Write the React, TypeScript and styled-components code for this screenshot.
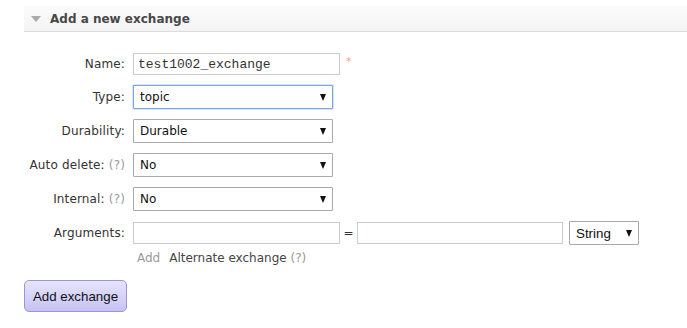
import React from "react";
import styled, { createGlobalStyle } from "styled-components";

const GlobalStyle = createGlobalStyle`
    html, body {
        margin: 0;
        padding: 0;
        background: #ffffff;
    }
    body {
        font-family: "DejaVu Sans", Verdana, sans-serif;
        font-size: 12px;
        color: #444444;
    }
`;

const Wrap = styled.div`
    width: 687px;
    height: 328px;
    overflow: hidden;
    padding-top: 6px;
    box-sizing: border-box;
`;

const SectionHeader = styled.div`
    margin-left: 24px;
    height: 25px;
    background: linear-gradient(#fbfbfb, #f4f4f4);
    border-bottom: 1px solid #dcdcdc;
    display: flex;
    align-items: center;
    padding-left: 7px;
    gap: 9px;
`;

const Caret = styled.span`
    width: 0;
    height: 0;
    border-left: 5px solid transparent;
    border-right: 5px solid transparent;
    border-top: 6px solid #aaaaaa;
    margin-top: 1px;
`;

const Title = styled.h2`
    margin: 0;
    font-size: 12px;
    font-weight: bold;
    color: #484848;
`;

const Form = styled.div`
    display: grid;
    grid-template-columns: 101px auto;
    column-gap: 8px;
    row-gap: 10px;
    padding: 21px 0 0 24px;
    align-items: center;
`;

const Label = styled.label`
    text-align: right;
    color: #333333;
    white-space: nowrap;
    letter-spacing: 0.15px;
`;

const Help = styled.span`
    color: #999999;
    margin-left: 4px;
`;

const Field = styled.div`
    display: flex;
    align-items: center;
`;

const TextInput = styled.input<{ $width: number }>`
    width: ${(p) => p.$width}px;
    height: 22px;
    box-sizing: border-box;
    border: 1px solid #cccccc;
    padding: 0 4px;
    font-family: "Liberation Mono", "Courier New", monospace;
    font-size: 13px;
    color: #333333;
    outline: none;
`;

const Required = styled.span`
    color: #f4a090;
    margin-left: 6px;
    font-size: 11px;
    align-self: flex-start;
    margin-top: 2px;
`;

const SelectWrap = styled.div<{ $width: number }>`
    position: relative;
    width: ${(p) => p.$width}px;
    height: 24px;
`;

const Select = styled.select<{ $focused?: boolean; $arial?: boolean }>`
    appearance: none;
    -webkit-appearance: none;
    width: 100%;
    height: 100%;
    box-sizing: border-box;
    background: #ffffff;
    border: 1px solid ${(p) => (p.$focused ? "#7ba4e0" : "#a9a9a9")};
    box-shadow: ${(p) => (p.$focused ? "0 0 0 1px #d6e4f7" : "none")};
    border-radius: 1px;
    padding: 0 6px;
    font-family: ${(p) =>
        p.$arial ? '"Liberation Sans", Arial, sans-serif' : '"DejaVu Sans", Verdana, sans-serif'};
    font-size: ${(p) => (p.$arial ? "13.33px" : "12px")};
    color: #111111;
    outline: none;
`;

const Arrow = styled.span`
    position: absolute;
    right: 7px;
    top: 9px;
    width: 0;
    height: 0;
    border-left: 3px solid transparent;
    border-right: 3px solid transparent;
    border-top: 7px solid #111111;
    pointer-events: none;
`;

const Equals = styled.span`
    width: 17px;
    text-align: center;
    color: #333333;
`;

const Gap = styled.span`
    width: 6px;
`;

const Links = styled.div`
    grid-column: 2;
    padding-left: 4px;
    display: flex;
    gap: 9px;
    line-height: 14px;
    margin-top: -4px;
`;

const Muted = styled.span`
    color: #999999;
`;

const Dark = styled.span`
    color: #444444;
`;

const Footer = styled.div`
    padding: 15px 0 0 24px;
`;

const AddButton = styled.button`
    width: 103px;
    height: 32px;
    box-sizing: border-box;
    border: 1px solid #9a95d6;
    border-radius: 5px;
    background: linear-gradient(#e6e5fd, #c6c2f5);
    font-family: "Liberation Sans", Arial, sans-serif;
    font-size: 13.33px;
    color: #111111;
    padding: 0;
`;

const selectRows = [
    { label: "Type:", value: "topic", help: false, focused: true },
    { label: "Durability:", value: "Durable", help: false, focused: false },
    { label: "Auto delete:", value: "No", help: true, focused: false },
    { label: "Internal:", value: "No", help: true, focused: false },
];

const App = () => {
    return (
        <Wrap>
            <GlobalStyle />
            <SectionHeader>
                <Caret />
                <Title>Add a new exchange</Title>
            </SectionHeader>
            <Form>
                <Label>Name:</Label>
                <Field>
                    <TextInput $width={207} defaultValue="test1002_exchange" />
                    <Required>*</Required>
                </Field>
                {selectRows.map((row) => (
                    <React.Fragment key={row.label}>
                        <Label>
                            {row.label}
                            {row.help && <Help>(?)</Help>}
                        </Label>
                        <Field>
                            <SelectWrap $width={200}>
                                <Select $focused={row.focused} defaultValue={row.value}>
                                    <option>{row.value}</option>
                                </Select>
                                <Arrow />
                            </SelectWrap>
                        </Field>
                    </React.Fragment>
                ))}
                <Label>Arguments:</Label>
                <Field>
                    <TextInput $width={207} />
                    <Equals>=</Equals>
                    <TextInput $width={206} />
                    <Gap />
                    <SelectWrap $width={70}>
                        <Select $arial defaultValue="String">
                            <option>String</option>
                        </Select>
                        <Arrow />
                    </SelectWrap>
                </Field>
                <Links>
                    <Muted>Add</Muted>
                    <Dark>
                        Alternate exchange <Muted>(?)</Muted>
                    </Dark>
                </Links>
            </Form>
            <Footer>
                <AddButton>Add exchange</AddButton>
            </Footer>
        </Wrap>
    );
};

export default App;
